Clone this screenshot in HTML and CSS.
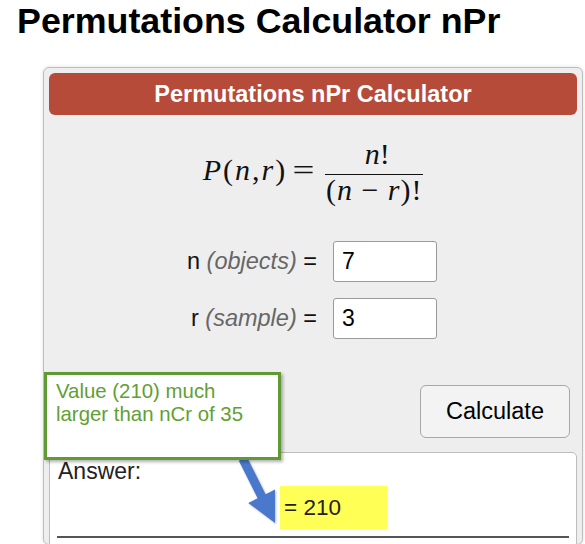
FILE: index.html
```html
<!DOCTYPE html>
<html>
<head>
<meta charset="utf-8">
<title>Permutations Calculator nPr</title>
<link rel="stylesheet" href="styles.css">
</head>
<body>
<h1 class="title">Permutations Calculator nPr</h1>
<div class="panel">
  <div class="panel-head">Permutations nPr Calculator</div>
  <div class="formula">
    <span class="lhs"><i>P</i>(<i>n</i>,<i>r</i>)<span class="eq">=</span></span>
    <span class="frac">
      <span class="num"><i>n</i>!</span>
      <span class="den">(<i>n</i> − <i>r</i>)!</span>
    </span>
  </div>
  <div class="fields">
    <label class="lbl">n <em>(objects)</em> =</label><input class="inp" type="text" value="7">
    <label class="lbl">r <em>(sample)</em> =</label><input class="inp" type="text" value="3">
  </div>
  <div class="actions"><button class="btn" type="button">Calculate</button></div>
  <div class="answer">
    <div class="ans-label">Answer:</div>
    <div class="ans-row"><span class="ans-val">= 210</span></div>
    <hr class="ans-rule">
  </div>
</div>
<svg class="arrow" width="585" height="544" viewBox="0 0 585 544">
  <polygon points="238.8,460.7 246.8,456.7 265.6,494.2 275,489.5 275,523 248.2,502.9 257.6,498.2" fill="#4a78cc"/>
</svg>
<div class="callout">Value (210) much<br>larger than nCr of 35</div>
</body>
</html>
```
FILE: styles.css
```css
html, body {
  margin: 0;
  padding: 0;
  height: 544px;
  overflow: hidden;
  background: #ffffff;
}
body {
  font-family: "Liberation Sans", Arial, sans-serif;
  color: #000;
}
.title {
  margin: 0;
  padding: 1px 0 0 17px;
  font-size: 35.8px;
  line-height: 40px;
  font-weight: bold;
  color: #000;
}
.panel {
  box-sizing: border-box;
  width: 540px;
  height: 478px;
  margin: 26px 0 0 43px;
  padding: 5px;
  border: 1px solid #bdbdbd;
  border-radius: 6px;
  background: #eeeeee;
  box-shadow: 0 0 4px rgba(0, 0, 0, 0.12);
  overflow: hidden;
}
.panel-head {
  height: 42px;
  line-height: 42px;
  border-radius: 6px;
  background: #b64b3a;
  color: #fff;
  text-align: center;
  font-weight: bold;
  font-size: 23.5px;
}
.formula {
  display: flex;
  justify-content: center;
  align-items: center;
  margin-top: 23px;
  font-family: "Liberation Serif", "Times New Roman", serif;
  font-size: 30px;
  color: #111;
}
.formula i { font-style: italic; }
.lhs {
  line-height: 32px;
  padding-bottom: 4px;
  letter-spacing: 2px;
  white-space: nowrap;
}
.eq {
  display: inline-block;
  letter-spacing: 0;
  margin: 0 13px 0 8px;
  transform: scaleX(1.3);
}
.frac {
  display: flex;
  flex-direction: column;
  align-items: stretch;
  width: 98px;
  text-align: center;
}
.num {
  line-height: 32px;
  padding: 0 0 4px 6px;
  border-bottom: 1.5px solid #111;
}
.den {
  line-height: 30px;
  letter-spacing: 1px;
  white-space: nowrap;
}
.fields {
  display: grid;
  grid-template-columns: auto 104px;
  justify-content: center;
  column-gap: 16px;
  row-gap: 16px;
  margin-top: 36px;
  padding-right: 2px;
}
.lbl {
  align-self: center;
  text-align: right;
  font-size: 23.5px;
  line-height: 27px;
  color: #111;
  white-space: nowrap;
}
.lbl em {
  color: #666;
  font-style: italic;
}
.inp {
  box-sizing: border-box;
  width: 104px;
  height: 41px;
  margin: 0;
  padding: 0 8px;
  border: 1px solid #9a9a9a;
  border-radius: 3px;
  background: #fff;
  font-family: "Liberation Sans", Arial, sans-serif;
  font-size: 23px;
  color: #000;
}
.actions {
  display: flex;
  justify-content: flex-end;
  margin-top: 46px;
  padding-right: 7px;
}
.btn {
  box-sizing: border-box;
  width: 150px;
  height: 53px;
  border: 1px solid #a8a8a8;
  border-radius: 6px;
  background: #f3f3f3;
  font-family: "Liberation Sans", Arial, sans-serif;
  font-size: 23.5px;
  color: #000;
  padding: 0;
}
.answer {
  margin-top: 14px;
  border: 1px solid #bdbdbd;
  border-radius: 5px;
  background: #fff;
  padding: 5px 7px 0 8px;
  height: 120px;
}
.ans-label {
  font-size: 23px;
  line-height: 27px;
  color: #222;
}
.ans-row {
  margin-top: 1px;
  padding-left: 222px;
}
.ans-val {
  display: inline-block;
  box-sizing: border-box;
  width: 107px;
  height: 43px;
  padding: 9px 0 0 4px;
  background: #ffff55;
  font-size: 22.5px;
  line-height: 26px;
  color: #222;
}
.ans-rule {
  margin: 7px 0 0 -1px;
  border: 0;
  height: 2px;
  background: #555;
}
.arrow {
  position: absolute;
  left: 0;
  top: 0;
  z-index: 1;
  pointer-events: none;
  filter: drop-shadow(1px 1px 1px rgba(0, 0, 0, 0.25));
}
.callout {
  position: absolute;
  left: 44px;
  top: 372px;
  z-index: 2;
  box-sizing: border-box;
  width: 237px;
  height: 88px;
  padding: 5px 0 0 9px;
  border: 3px solid #5f9b32;
  background: #fff;
  box-shadow: 2px 2px 3px rgba(0, 0, 0, 0.3);
  color: #62a033;
  font-size: 20.4px;
  line-height: 23px;
}
```
